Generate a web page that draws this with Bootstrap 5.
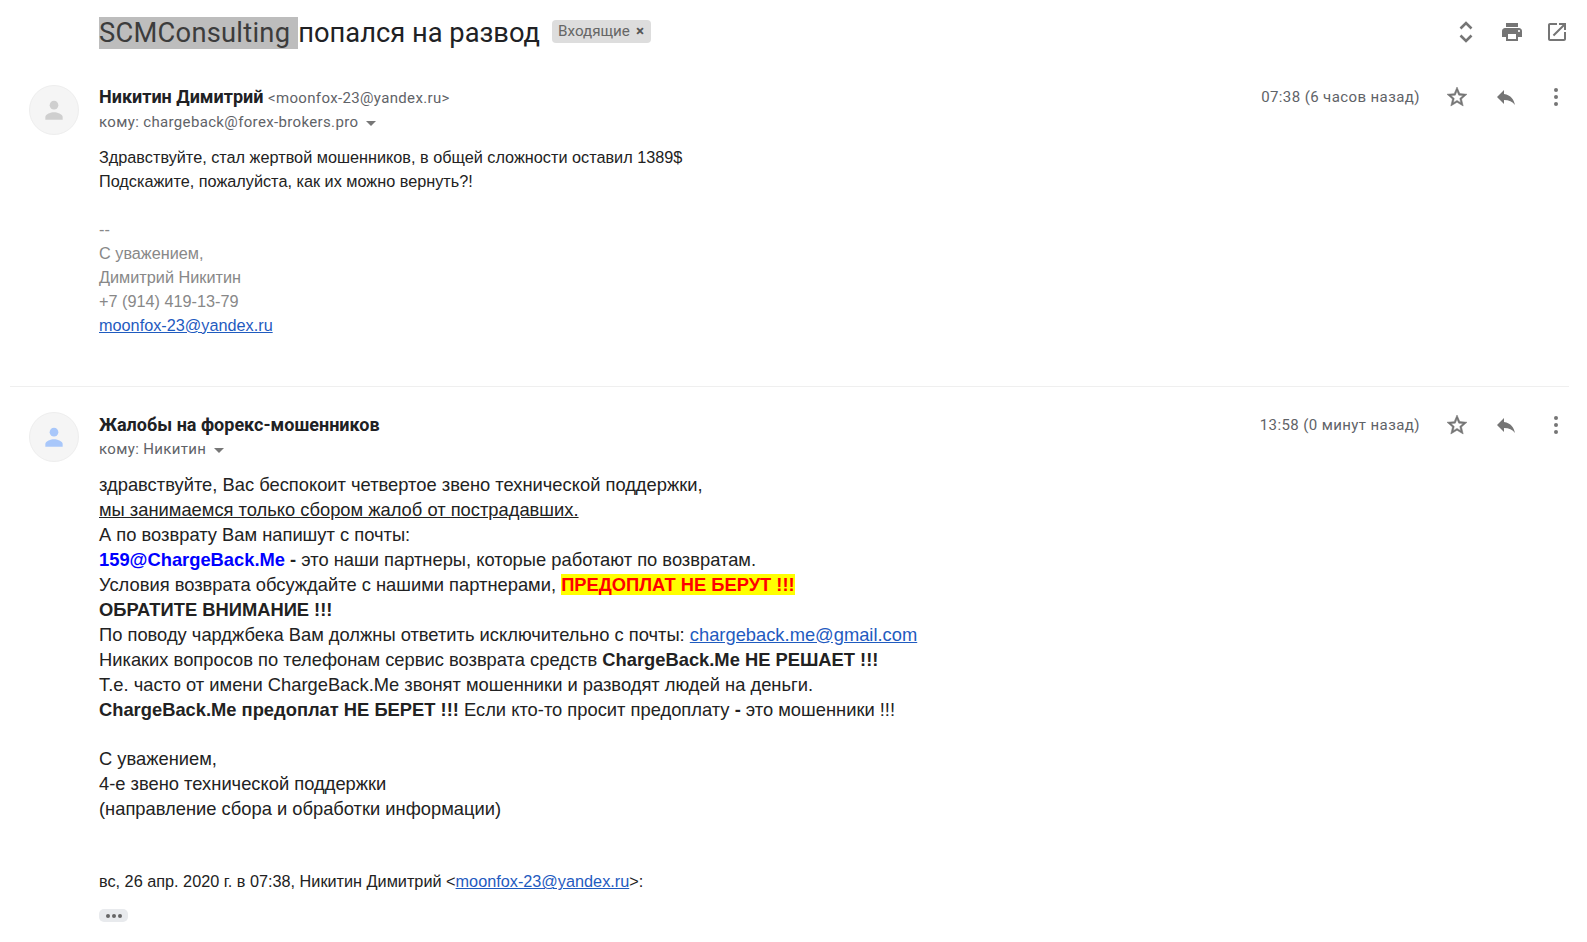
<!DOCTYPE html>
<html lang="ru">
<head>
  <meta charset="UTF-8" />
  <title>SCMConsulting попался на развод</title>
  <meta name="viewport" content="width=device-width, initial-scale=1.0"/>
  <link href="https://cdn.jsdelivr.net/npm/bootstrap@5.3.3/dist/css/bootstrap.min.css" rel="stylesheet">
  <style>
    body { background: #fff; color: #222; font-family: "Liberation Sans", Arial, sans-serif; overflow: hidden; height: 942px; }
    .subject-row { height: 64px; padding: 15px 18px 0 99px; }
    .subject { font-family: Roboto, sans-serif; font-size: 27.3px; line-height: 36px; color: #202124; white-space: nowrap; }
    .subject mark { background: #bdbdbd; color: #3c3c3c; padding: 0 8px 0 0; letter-spacing: .25px; }
    .tag-in { background: #ddd; color: #666; font-family: Roboto, sans-serif; font-size: 15.2px; line-height: 23px; height: 23px; padding: 0 7px 0 6px; border-radius: 4px; margin-left: 12px; margin-top: 5px; white-space: nowrap; }
    .tag-in b { color: #555; margin-left: 6px; }
    .icon-set { gap: 21.5px; }
    .icon-set svg { display: block; }
    .row-icons { gap: 25.6px; }
    .row-icons svg { display: block; }
    .mail { padding-left: 29px; padding-right: 19px; }
    .mail-one { height: 323px; padding-top: 21px; border-bottom: 1px solid #efefef; margin: 0 18px 0 10px; padding-left: 19px; padding-right: 1px; }
    .mail-two { padding-top: 26px; }
    .face { width: 50px; height: 50px; background: #f5f5f5; border: 1px solid #eee; flex: none; margin-right: 20px; }
    .mail-two .face { margin-top: -1px; }
    .who { font-size: 18px; font-family: Roboto, sans-serif; font-weight: 700; line-height: 24px; color: #202124; }
    .addr { font-family: Roboto, sans-serif; font-size: 15px; font-weight: 400; color: #5f6368; letter-spacing: .35px; }
    .to-line { font-family: Roboto, sans-serif; font-size: 15px; line-height: 24px; color: #5f6368; letter-spacing: .35px; }
    .caret-down { display: inline-block; border: 5px solid transparent; border-top-color: #777; border-bottom: 0; margin-left: 4px; vertical-align: middle; }
    .when { font-family: Roboto, sans-serif; font-size: 15px; color: #5f6368; letter-spacing: .4px; line-height: 24px; margin-right: 25px; }
    .star-outline { stroke: #757575; stroke-width: .5; }
    .msg-small { font-size: 16.25px; line-height: 24px; margin-top: 11px; color: #222; }
    .sign { color: #888; }
    .msg-big { font-size: 18.33px; line-height: 24.95px; margin-top: 12px; color: #222; }
    .msg-big a, .msg-small a, .quote a { color: #1f5bbf; }
    .blue-addr { color: #00f; font-weight: 700; }
    .warn { background: #ff0; color: #f00; font-weight: 700; }
    .quote { font-size: 16.25px; line-height: 24px; margin-top: 47px; color: #222; }
    .more-dots { width: 29px; height: 13px; background: #e8eaed; border-radius: 5px; margin-top: 16px; gap: 2px; }
    .more-dots i { width: 4px; height: 4px; background: #666; border-radius: 50%; }
  </style>
</head>
<body>

<!-- Subject -->
<div class="subject-row d-flex justify-content-between">
  <div class="d-flex align-items-start">
    <div class="subject"><mark>SCMConsulting</mark>попался на развод</div>
    <div class="tag-in">Входящие<b>×</b></div>
  </div>
  <div class="d-flex icon-set align-items-center align-self-start mt-1">
    <svg width="24" height="26" viewBox="0 0 24 26" fill="none" stroke="#757575" stroke-width="2.6"><path d="M6.500 9.500 12 4l5.500 5.500M6.500 16.500 12 22l5.500-5.500"/></svg>
    <svg width="24" height="24" viewBox="0 0 24 24" fill="#757575"><path d="M19 8H5c-1.660 0-3 1.340-3 3v6h4v4h12v-4h4v-6c0-1.660-1.340-3-3-3zm-3 11H8v-5h8v5zm3-7c-.55 0-1-.45-1-1s.45-1 1-1 1 .45 1 1-.45 1-1 1zm-1-9H6v4h12V3z"/></svg>
    <svg width="24" height="24" viewBox="0 0 24 24" fill="#757575"><path d="M19 19H5V5h7V3H5c-1.110 0-2 .9-2 2v14c0 1.100.89 2 2 2h14c1.100 0 2-.9 2-2v-7h-2v7zM14 3v2h3.590l-9.830 9.830 1.410 1.410L19 6.410V10h2V3h-7z"/></svg>
  </div>
</div>

<!-- First message -->
<div class="mail-one d-flex">
  <div class="face rounded-circle d-flex align-items-center justify-content-center">
    <svg width="26" height="26" viewBox="0 0 24 24" fill="#cfcfcf"><circle cx="12" cy="7.500" r="4"/><path d="M4 21v-2.500c0-3 5.300-4.500 8-4.500s8 1.500 8 4.500V21z"/></svg>
  </div>
  <div class="flex-grow-1">
    <div class="d-flex justify-content-between">
      <div>
        <div class="who">Никитин Димитрий <span class="addr">&lt;moonfox-23@yandex.ru&gt;</span></div>
        <div class="to-line">кому: chargeback@forex-brokers.pro <span class="caret-down"></span></div>
      </div>
      <div class="d-flex align-items-start">
        <div class="when">07:38 (6 часов назад)</div>
        <div class="d-flex row-icons">
          <svg width="24" height="24" viewBox="0 0 24 24" fill="#757575"><path class="star-outline" d="M22 9.240l-7.190-.62L12 2 9.190 8.630 2 9.240l5.460 4.730L5.820 21 12 17.270 18.180 21l-1.630-7.030L22 9.240zM12 15.400l-3.760 2.270 1-4.280-3.320-2.880 4.380-.38L12 6.100l1.710 4.040 4.380.38-3.320 2.880 1 4.280L12 15.400z"/></svg>
          <svg width="24" height="24" viewBox="0 0 24 24" fill="#757575"><path d="M10 9V5l-7 7 7 7v-4.100c5 0 8.500 1.600 11 5.100-1-5-4-10-11-11z"/></svg>
          <svg width="24" height="24" viewBox="0 0 24 24" fill="#757575"><circle cx="12" cy="5" r="2"/><circle cx="12" cy="12" r="2"/><circle cx="12" cy="19" r="2"/></svg>
        </div>
      </div>
    </div>
    <div class="msg-small">
      Здравствуйте, стал жертвой мошенников, в общей сложности оставил 1389$<br>
      Подскажите, пожалуйста, как их можно вернуть?!<br><br>
      <div class="sign">
        --<br>
        С уважением,<br>
        Димитрий Никитин<br>
        +7 (914) 419-13-79<br>
        <a href="#">moonfox-23@yandex.ru</a>
      </div>
    </div>
  </div>
</div>

<!-- Second message -->
<div class="mail mail-two d-flex">
  <div class="face rounded-circle d-flex align-items-center justify-content-center">
    <svg width="26" height="26" viewBox="0 0 24 24" fill="#a8c7fa"><circle cx="12" cy="7.500" r="4"/><path d="M4 21v-2.500c0-3 5.300-4.500 8-4.500s8 1.500 8 4.500V21z"/></svg>
  </div>
  <div class="flex-grow-1">
    <div class="d-flex justify-content-between">
      <div>
        <div class="who">Жалобы на форекс-мошенников</div>
        <div class="to-line">кому: Никитин <span class="caret-down"></span></div>
      </div>
      <div class="d-flex align-items-start">
        <div class="when">13:58 (0 минут назад)</div>
        <div class="d-flex row-icons">
          <svg width="24" height="24" viewBox="0 0 24 24" fill="#757575"><path class="star-outline" d="M22 9.240l-7.190-.62L12 2 9.190 8.630 2 9.240l5.460 4.730L5.820 21 12 17.270 18.180 21l-1.630-7.030L22 9.240zM12 15.400l-3.760 2.270 1-4.280-3.320-2.880 4.380-.38L12 6.100l1.710 4.040 4.380.38-3.320 2.880 1 4.280L12 15.400z"/></svg>
          <svg width="24" height="24" viewBox="0 0 24 24" fill="#757575"><path d="M10 9V5l-7 7 7 7v-4.100c5 0 8.500 1.600 11 5.100-1-5-4-10-11-11z"/></svg>
          <svg width="24" height="24" viewBox="0 0 24 24" fill="#757575"><circle cx="12" cy="5" r="2"/><circle cx="12" cy="12" r="2"/><circle cx="12" cy="19" r="2"/></svg>
        </div>
      </div>
    </div>
    <div class="msg-big">
      здравствуйте, Вас беспокоит четвертое звено технической поддержки,<br>
      <u>мы занимаемся только сбором жалоб от пострадавших.</u><br>
      А по возврату Вам напишут с почты:<br>
      <span class="blue-addr">159@ChargeBack.Me</span> <b>-</b> это наши партнеры, которые работают по возвратам.<br>
      Условия возврата обсуждайте с нашими партнерами, <span class="warn">ПРЕДОПЛАТ НЕ БЕРУТ !!!</span><br>
      <b>ОБРАТИТЕ ВНИМАНИЕ !!!</b><br>
      По поводу чарджбека Вам должны ответить исключительно с почты: <a href="#">chargeback.me@gmail.com</a><br>
      Никаких вопросов по телефонам сервис возврата средств <b>ChargeBack.Me НЕ РЕШАЕТ !!!</b><br>
      Т.е. часто от имени ChargeBack.Me звонят мошенники и разводят людей на деньги.<br>
      <b>ChargeBack.Me предоплат НЕ БЕРЕТ !!!</b> Если кто-то просит предоплату <b>-</b> это мошенники !!!<br><br>
      С уважением,<br>
      4-е звено технической поддержки<br>
      (направление сбора и обработки информации)
    </div>
    <div class="quote">вс, 26 апр. 2020 г. в 07:38, Никитин Димитрий &lt;<a href="#">moonfox-23@yandex.ru</a>&gt;:</div>
    <div class="more-dots d-flex align-items-center justify-content-center"><i></i><i></i><i></i></div>
  </div>
</div>

<script src="https://cdn.jsdelivr.net/npm/bootstrap@5.3.3/dist/js/bootstrap.bundle.min.js"></script>
</body>
</html>
